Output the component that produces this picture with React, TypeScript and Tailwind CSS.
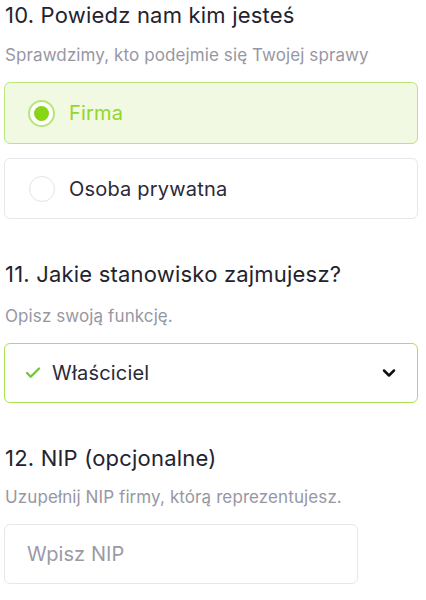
import { Check, ChevronDown } from "lucide-react";

const FONT = { fontFamily: "Inter, 'Noto Sans', sans-serif" };

function Heading({ children, className }: { children: string; className?: string }) {
  return (
    <h2 className={`text-[22px] leading-[28px] font-normal tracking-[0.2px] text-[#23232f] ${className ?? ""}`}>
      {children}
    </h2>
  );
}

function Hint({ children, className }: { children: string; className?: string }) {
  return (
    <p className={`text-[17px] leading-[24px] tracking-[0.1px] text-[#9797a3] ${className ?? ""}`}>{children}</p>
  );
}

function RadioOption({ label, selected }: { label: string; selected?: boolean }) {
  return (
    <div
      className={
        selected
          ? "flex h-[62px] items-center gap-[14px] rounded-[6px] border border-[#bce67a] bg-[#f1f9e2] pl-[23px]"
          : "flex h-[61px] items-center gap-[14px] rounded-[6px] border border-[#e6e6ec] bg-white pl-[24px]"
      }
    >
      {selected ? (
        <span className="flex h-[27px] w-[27px] items-center justify-center rounded-full border-2 border-[#b8e47a] bg-white">
          <span className="h-[15px] w-[15px] rounded-full bg-[#8ad417]" />
        </span>
      ) : (
        <span className="h-[26px] w-[26px] rounded-full border border-[#e4e4ea] bg-white" />
      )}
      <span
        className={
          selected
            ? "text-[20px] tracking-[0.2px] text-[#93d62c]"
            : "text-[20px] tracking-[0.2px] text-[#2a2a38]"
        }
      >
        {label}
      </span>
    </div>
  );
}

export default function App() {
  return (
    <div className="min-h-[600px] w-[426px] bg-white pl-[4px] pr-[8px] pt-[1px]" style={FONT}>
      <Heading className="pl-[1px]">10. Powiedz nam kim jesteś</Heading>
      <Hint className="mt-[14px] pl-[1px]">Sprawdzimy, kto podejmie się Twojej sprawy</Hint>

      <div className="mt-[15px] flex flex-col gap-[14px]">
        <RadioOption label="Firma" selected />
        <RadioOption label="Osoba prywatna" />
      </div>

      <Heading className="mt-[41px] pl-[1px]">11. Jakie stanowisko zajmujesz?</Heading>
      <Hint className="mt-[16px] pl-[1px]">Opisz swoją funkcję.</Hint>

      <div className="mt-[15px] flex h-[60px] items-center rounded-[6px] border border-[#a9e24f] bg-white pl-[19px] pr-[18px]">
        <Check size={18} strokeWidth={3} className="text-[#6cc832]" />
        <span className="ml-[10px] flex-1 text-[20px] tracking-[0.2px] text-[#2a2a38]">Właściciel</span>
        <ChevronDown size={20} strokeWidth={3} className="text-[#111]" />
      </div>

      <Heading className="mt-[41px] pl-[1px]">12. NIP (opcjonalne)</Heading>
      <Hint className="mt-[13px] pl-[1px]">Uzupełnij NIP firmy, którą reprezentujesz.</Hint>

      <div className="mt-[15px] flex h-[60px] w-[354px] items-center rounded-[6px] border border-[#e6e6ec] bg-white pl-[22px]">
        <span className="text-[20px] tracking-[0.1px] text-[#9a9aa6]">Wpisz NIP</span>
      </div>
    </div>
  );
}
